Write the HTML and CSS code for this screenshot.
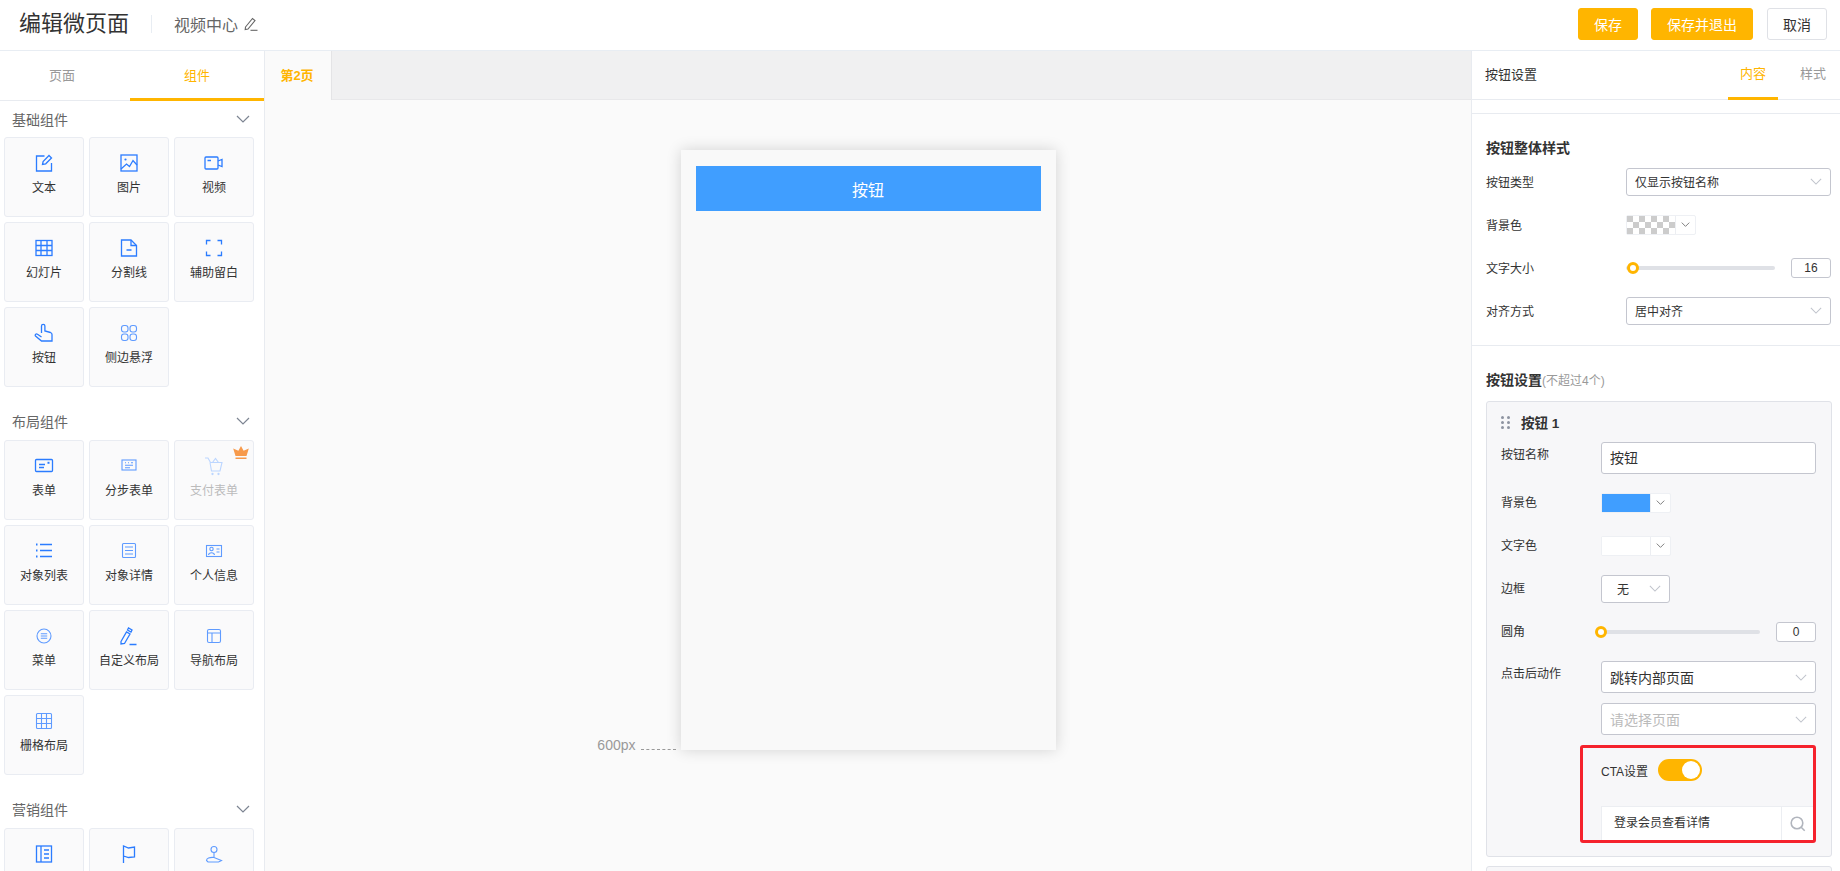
FILE: index.html
```html
<!DOCTYPE html>
<html lang="zh-CN">
<head>
<meta charset="utf-8">
<title>编辑微页面</title>
<link rel="stylesheet" href="styles.css">
</head>
<body>
<svg class="defs" width="0" height="0">
  <defs>
    <symbol id="chev" viewBox="0 0 14 8"><path d="M1 1l6 6 6-6"/></symbol>
  </defs>
</svg>
<header class="topbar">
  <div class="brand">
    <h1 class="title">编辑微页面</h1>
    <span class="sep"></span>
    <span class="pagename">视频中心</span>
    <svg class="pencil" viewBox="0 0 14 14"><path d="M1.500 10L8.500 1.500l2.500 2-7 8.500-2.800.6z"/><path d="M6.500 13.300h7"/></svg>
  </div>
  <div class="actions">
    <button class="btn primary w60">保存</button>
    <button class="btn primary w102">保存并退出</button>
    <button class="btn ghost w60">取消</button>
  </div>
</header>
<div class="main">
  <aside class="left">
    <div class="ltabs">
      <div class="ltab tab-a">页面</div>
      <div class="ltab tab-b on">组件</div>
    </div>
    <section class="group">
      <div class="ghead"><span>基础组件</span><svg class="gchev"><use href="#chev"/></svg></div>
      <div class="tiles">
        <div class="tile"><svg class="ico" viewBox="0 0 20 20"><path d="M10.500 3H2.500v15h15v-8"/><path d="M8.500 11.500l.6-3L15 2.500l2.500 2.500-5.800 5.800z"/></svg><span>文本</span></div>
        <div class="tile"><svg class="ico" viewBox="0 0 20 20"><rect x="2" y="2" width="16" height="16"/><circle cx="6.500" cy="6.500" r="1.100" class="solid"/><path d="M2 16l5.500-5 3 2.500L14 7.500l4 4.500"/></svg><span>图片</span></div>
        <div class="tile"><svg class="ico" viewBox="0 0 20 20"><rect x="1" y="4" width="13" height="12" rx="1"/><path d="M14 8l4-1.500v7L14 12M3.500 7.500h3.500"/></svg><span>视频</span></div>
        <div class="tile"><svg class="ico" viewBox="0 0 20 20"><rect x="2" y="2.500" width="16" height="15"/><path d="M2 7.500h16M2 12.500h16M7 2.500v15M13 2.500v15"/></svg><span>幻灯片</span></div>
        <div class="tile"><svg class="ico" viewBox="0 0 20 20"><path d="M2.500 2h9.500l5.500 5.500V18h-15z"/><path d="M12 2v5.500h5.500M7.500 12h5"/></svg><span>分割线</span></div>
        <div class="tile"><svg class="ico" viewBox="0 0 20 20"><path d="M2.500 6.500v-4h4M13.500 2.500h4v4M17.500 13.500v4h-4M6.500 17.500h-4v-4"/></svg><span>辅助留白</span></div>
        <div class="tile"><svg class="ico" viewBox="0 0 20 20"><path d="M7.500 10V3a1.700 1.700 0 0 1 3.400 0v5l5.600 1.500c1 .3 1.500 1 1.500 2V18H7.500L1.500 13c-.9-1.200.8-2.700 2-1.800l4 2.800"/></svg><span>按钮</span></div>
        <div class="tile"><svg class="ico lite" viewBox="0 0 20 20"><rect x="2.500" y="2.500" width="6.500" height="6.500" rx="2.500"/><rect x="11" y="2.500" width="6.500" height="6.500" rx="2.500"/><rect x="2.500" y="11" width="6.500" height="6.500" rx="2.500"/><rect x="11" y="11" width="6.500" height="6.500" rx="2.500"/></svg><span>侧边悬浮</span></div>
      </div>
    </section>
    <section class="group next">
      <div class="ghead"><span>布局组件</span><svg class="gchev"><use href="#chev"/></svg></div>
      <div class="tiles">
        <div class="tile"><svg class="ico" viewBox="0 0 20 20"><rect x="1.500" y="3.500" width="17" height="12" rx="1"/><path d="M5 8.500h6M5 11.500h5"/><path d="M13.500 6.800h2" class="thick"/></svg><span>表单</span></div>
        <div class="tile"><svg class="ico lite" viewBox="0 0 20 20"><rect x="3" y="4" width="14" height="10"/><path d="M6 6.800h1M9 6.800h1M12 6.800h2M6 9.300h8M6 11.800h5"/></svg><span>分步表单</span></div>
        <div class="tile"><svg class="crown" viewBox="0 0 16 14"><path d="M8 0l2.600 4.800L15.800 2.500 13.500 10h-11L.2 2.500l5.200 2.300z"/><rect x="2.500" y="11.500" width="11" height="1.500"/></svg><svg class="ico pale" viewBox="0 0 20 20"><path d="M1 2h3l2.500 4.500H18L16 15H7.500L6 6.500"/><path d="M8.500 6.500l3-4 3 4"/><circle cx="8.500" cy="18" r=".6"/><circle cx="14.500" cy="18" r=".6"/></svg><span class="off">支付表单</span></div>
        <div class="tile"><svg class="ico" viewBox="0 0 20 20"><path d="M6 3.500h12M6 9.500h12M6 15.500h12"/><path d="M2 3.500h1.500M2 9.500h1.500M2 15.500h1.500" class="thick"/></svg><span>对象列表</span></div>
        <div class="tile"><svg class="ico lite" viewBox="0 0 20 20"><rect x="3.500" y="2.500" width="13" height="14" rx="1"/><path d="M6 6h8M6 9.500h8M6 13h8"/></svg><span>对象详情</span></div>
        <div class="tile"><svg class="ico lite" viewBox="0 0 20 20"><rect x="2.500" y="4.500" width="15" height="11"/><circle cx="7.500" cy="8" r="1.700"/><path d="M4.500 14c.5-3 5.500-3 6 0M12.500 8h3M12.500 11h3"/></svg><span>个人信息</span></div>
        <div class="tile"><svg class="ico lite" viewBox="0 0 20 20"><circle cx="10" cy="10" r="7"/><path d="M6.800 7.800h6.400M6.800 10h6.400M6.800 12.200h6.400"/></svg><span>菜单</span></div>
        <div class="tile"><svg class="ico" viewBox="0 0 20 20"><path d="M2 15.500L7.500 6l3.500 2-5.500 9.500-3.500.5zM8.500 4l1-2 3.500 2-1 2zM10.500 18.500h7"/></svg><span>自定义布局</span></div>
        <div class="tile"><svg class="ico lite" viewBox="0 0 20 20"><rect x="3.500" y="3.500" width="13" height="13" rx="1.500"/><path d="M3.500 7h13M8 7v9.500"/></svg><span>导航布局</span></div>
        <div class="tile"><svg class="ico lite" viewBox="0 0 20 20"><rect x="2.500" y="2.500" width="15" height="15" rx="1"/><path d="M2.500 7.500h15M2.500 12.500h15M7.500 2.500v15M12.500 2.500v15"/></svg><span>栅格布局</span></div>
      </div>
    </section>
    <section class="group next">
      <div class="ghead"><span>营销组件</span><svg class="gchev"><use href="#chev"/></svg></div>
      <div class="tiles">
        <div class="tile"><svg class="ico" viewBox="0 0 20 20"><rect x="2.500" y="2" width="15" height="16"/><path d="M7 2v16M10 6h5M10 10h5M10 14h5"/></svg></div>
        <div class="tile"><svg class="ico" viewBox="0 0 20 20"><path d="M4.500 19V2l5 2 6-1v10l-6 .5-5-1.500"/></svg></div>
        <div class="tile"><svg class="ico lite" viewBox="0 0 20 20"><circle cx="10" cy="5.500" r="3"/><path d="M10 8.500v5M2.500 16.500c0-2 3-3.500 7.500-3l7.500 3-3 1.500H4z"/></svg></div>
      </div>
    </section>
  </aside>

  <main class="center">
    <div class="ctabs"><div class="ctab">第2页</div></div>
    <div class="canvas">
      <div class="phone">
        <div class="pbtn">按钮</div>
        <div class="mark"><span>600px</span><i></i></div>
      </div>
    </div>
  </main>

  <aside class="right">
    <div class="rhead">
      <span class="rtitle">按钮设置</span>
      <div class="rtabs"><span class="rtab on">内容</span><span class="rtab">样式</span></div>
    </div>
    <div class="rgap"></div>
    <section class="block first">
      <h3 class="btitle">按钮整体样式</h3>
      <div class="row"><label>按钮类型</label><div class="sel wide"><span>仅显示按钮名称</span><svg class="schev"><use href="#chev"/></svg></div></div>
      <div class="row"><label>背景色</label><div class="color"><span class="sw checker"></span><span class="cdrop"><svg class="cchev"><use href="#chev"/></svg></span></div></div>
      <div class="row"><label>文字大小</label><div class="slide"><div class="track"><b class="knob k1"></b></div><div class="num">16</div></div></div>
      <div class="row"><label>对齐方式</label><div class="sel wide"><span>居中对齐</span><svg class="schev"><use href="#chev"/></svg></div></div>
    </section>
    <section class="block second">
      <h3 class="btitle last">按钮设置<small>(不超过4个)</small></h3>
      <div class="card">
        <div class="chead"><span class="drag"><i></i><i></i><i></i><i></i><i></i><i></i></span><strong>按钮 1</strong></div>
        <div class="irow"><label>按钮名称</label><div class="field">按钮</div></div>
        <div class="row tall"><label>背景色</label><div class="color"><span class="sw blue"></span><span class="cdrop"><svg class="cchev"><use href="#chev"/></svg></span></div></div>
        <div class="row tall"><label>文字色</label><div class="color"><span class="sw white"></span><span class="cdrop"><svg class="cchev"><use href="#chev"/></svg></span></div></div>
        <div class="row tall"><label>边框</label><div class="sel small"><span>无</span><svg class="schev"><use href="#chev"/></svg></div></div>
        <div class="row tall"><label>圆角</label><div class="slide"><div class="track"><b class="knob k0"></b></div><div class="num">0</div></div></div>
        <div class="irow action"><label>点击后动作</label><div class="stack">
          <div class="sel high"><span>跳转内部页面</span><svg class="schev"><use href="#chev"/></svg></div>
          <div class="sel high"><span class="ph">请选择页面</span><svg class="schev"><use href="#chev"/></svg></div>
        </div></div>
        <div class="cta">
          <div class="ctarow"><span>CTA设置</span><span class="toggle"><b></b></span></div>
          <div class="search"><span class="stext">登录会员查看详情</span><span class="sbtn"><svg class="mag" viewBox="0 0 16 16"><circle cx="7" cy="7" r="5.800"/><path d="M11.200 11.200l3.500 3.500"/></svg></span></div>
        </div>
      </div>
      <div class="card nextcard"></div>
    </section>
  </aside>
</div>
</body>
</html>
```

FILE: styles.css
```css
* { box-sizing: border-box; }
html, body { margin: 0; height: 871px; overflow: hidden; }
body { font-family: "Liberation Sans", "Noto Sans CJK SC", sans-serif; font-size: 12px; color: #333; background: #fff; }
.defs { position: absolute; }
button { font: inherit; }

.topbar { height: 51px; border-bottom: 1px solid #e8edf3; display: flex; justify-content: space-between; align-items: center; padding: 0 13px 2px 19px; background: #fff; }
.brand { display: flex; align-items: center; }
.title { margin: 0; font-size: 22px; font-weight: 400; color: #333; line-height: 30px; }
.sep { width: 1px; height: 18px; background: #e8edf3; margin: 0 22px; }
.pagename { font-size: 16px; color: #666; }
.pencil { width: 14px; height: 14px; margin-left: 6px; fill: none; stroke: #666; stroke-width: 1.100; }
.actions { display: flex; gap: 13px; }
.btn { height: 32px; border-radius: 3px; font-size: 14px; padding: 0; cursor: pointer; }
.primary { background: #ffb500; border: 1px solid #ffb500; color: #fff; }
.ghost { background: #fff; border: 1px solid #dfe1e6; color: #333; margin-left: 1px; }
.w60 { width: 60px; }
.w102 { width: 102px; }

.main { display: flex; height: 820px; }
.left { width: 265px; flex: none; border-right: 1px solid #e8ebf0; background: #fff; overflow: hidden; }
.ltabs { display: flex; height: 50px; border-bottom: 1px solid #e8ebf0; }
.ltab { display: flex; align-items: center; justify-content: center; font-size: 13px; color: #999; padding-bottom: 2px; }
.tab-a { width: 130px; padding-right: 6px; }
.tab-b { width: 134px; }
.ltab.on { color: #ffb500; box-shadow: 0 1px 0 #ffb500, inset 0 -2px 0 #ffb500; }
.group { padding: 0 0 0 4px; }
.group.next { margin-top: 16px; }
.ghead { height: 36px; display: flex; align-items: center; justify-content: space-between; padding: 0 14px 1px 8px; font-size: 14px; color: #666; }
.group.next .ghead { height: 37px; }
.gchev { width: 14px; height: 8px; fill: none; stroke: #7d8592; stroke-width: 1.200; }
.tiles { display: grid; grid-template-columns: repeat(3, 80px); grid-auto-rows: 80px; gap: 5px; }
.tile { position: relative; border: 1px solid #e9ecf2; border-radius: 3px; background: #fafafb; display: flex; flex-direction: column; align-items: center; padding-top: 15px; gap: 5px; }
.tile span { line-height: 20px; color: #333; white-space: nowrap; }
.tile span.off { color: #bbb; }
.ico { width: 20px; height: 20px; fill: none; stroke: #2b7cff; stroke-width: 1.300; }
.ico.lite { stroke: #5f9bff; stroke-width: 1.100; }
.ico.pale { stroke: #bcd6ff; stroke-width: 1.100; }
.ico .solid { fill: #2b7cff; stroke: none; }
.ico .thick { stroke-width: 2; }
.crown { position: absolute; top: 5px; right: 4px; width: 16px; height: 14px; fill: #f79a4b; }

.center { flex: 1; min-width: 0; display: flex; flex-direction: column; background: #fafafa; }
.ctabs { height: 49px; background: #f0f0f1; border-bottom: 1px solid #e8e8ea; flex: none; display: flex; }
.ctab { width: 67px; height: 49px; background: #fafafa; border-right: 1px solid #e4e4e6; color: #ffb500; font-weight: 700; font-size: 13px; display: flex; align-items: center; justify-content: center; padding: 0 2px 2px 0; }
.canvas { flex: 1; padding-top: 50px; }
.phone { position: relative; width: 375px; height: 600px; margin: 0 auto; background: #f9f9f9; box-shadow: 0 0 14px rgba(0, 0, 0, .16); padding: 16px 15px 0; }
.pbtn { height: 45px; background: #409eff; color: #fff; font-size: 16px; display: flex; align-items: center; justify-content: center; }
.mark { position: absolute; right: 380px; bottom: -3px; display: flex; align-items: flex-end; gap: 5px; font-size: 14px; color: #999; line-height: 16px; white-space: nowrap; }
.mark i { width: 35px; border-bottom: 1px dashed #999; margin-bottom: 3px; }

.right { width: 369px; flex: none; border-left: 1px solid #e8ebf0; background: #fff; overflow: hidden; }
.rhead { height: 49px; border-bottom: 1px solid #e8ebf0; display: flex; justify-content: space-between; align-items: center; padding: 0 14px 4px 13px; }
.rtitle { font-size: 13px; color: #333; }
.rtabs { display: flex; align-items: center; }
.rtab { font-size: 13px; color: #999; height: 49px; line-height: 45px; margin-bottom: -4px; }
.rtab.on { color: #ffb500; width: 50px; text-align: center; box-shadow: inset 0 -3px 0 #ffb500; margin-right: 22px; }
.rgap { height: 14px; border-bottom: 1px solid #e8ebf0; }
.block { padding: 24px 9px 0 14px; }
.block.first { padding-bottom: 13px; border-bottom: 1px solid #e8ebf0; }
.btitle { margin: 0 0 2px; font-size: 14px; font-weight: 700; line-height: 20px; color: #333; }
.btitle.last { margin-bottom: 10px; }
.btitle small { font-size: 12px; font-weight: 400; color: #999; }
.row { height: 43px; display: flex; align-items: center; }
.row label, .irow label { width: 140px; flex: none; color: #333; padding-bottom: 1px; }
.card .row label, .card .irow label { width: 100px; }
.card .row label { padding-bottom: 2px; }
.sel { height: 28px; border: 1px solid #c4c6cf; border-radius: 3px; background: #fff; display: flex; align-items: center; justify-content: space-between; padding: 0 8px; color: #333; }
.sel.wide { width: 205px; }
.sel.small { width: 69px; padding-left: 15px; }
.sel.high { height: 32px; width: 215px; }
.schev { width: 12px; height: 7px; fill: none; stroke: #c0c4cc; stroke-width: 1.200; }
.ph { color: #bbb; }
.color { width: 70px; height: 20px; display: flex; background: #fff; border: 1px solid #eef0f4; border-radius: 2px; }
.sw { width: 48px; height: 100%; }
.checker { background-color: #fff; background-image: conic-gradient(#fff 25%, #ccc 0 50%, #fff 0 75%, #ccc 0); background-size: 12px 12px; }
.blue { background: #409eff; }
.white { background: #fff; }
.cdrop { flex: 1; border-left: 1px solid #eceef2; display: flex; align-items: center; justify-content: center; }
.cchev { width: 9px; height: 5px; fill: none; stroke: #777; stroke-width: 1.500; }
.slide { display: flex; align-items: center; gap: 16px; }
.track { position: relative; width: 149px; height: 4px; background: #dfe1e6; border-radius: 2px; }
.knob { position: absolute; top: -4px; width: 12px; height: 12px; border: 3px solid #ffb500; border-radius: 50%; background: #fff; }
.k1 { left: 1px; }
.k0 { left: -6px; }
.card .track { width: 159px; }
.num { width: 40px; height: 20px; border: 1px solid #c4c6cf; border-radius: 3px; background: #fff; text-align: center; line-height: 18px; color: #333; }

.card { border: 1px solid #e0e2e8; border-radius: 3px; background: #f7f7f9; padding: 0 14px 13px; width: 346px; }
.chead { height: 40px; display: flex; align-items: center; }
.chead strong { font-size: 13.500px; font-weight: 700; color: #333; margin-left: 11px; }
.drag { display: grid; grid-template-columns: repeat(2, 3px); gap: 2px 3px; width: 9px; }
.drag i { width: 3px; height: 3px; border-radius: 50%; background: #8d93a0; }
.irow { display: flex; margin-bottom: 7px; }
.irow label { padding-top: 3px; line-height: 20px; }
.irow.action { margin: 8px 0 10px; }
.field { width: 215px; height: 32px; border: 1px solid #c4c6cf; border-radius: 3px; background: #fff; line-height: 30px; padding-left: 8px; font-size: 14px; }
.stack { display: flex; flex-direction: column; gap: 10px; }
.high span { font-size: 14px; }
.row.tall { height: 43px; }
.cta { margin-left: 79px; width: 236px; height: 98px; border: 3px solid #f5222d; border-radius: 3px; padding: 11px 0 0 18px; }
.ctarow { display: flex; align-items: center; gap: 10px; height: 22px; margin-bottom: 25px; }
.toggle { width: 44px; height: 22px; border-radius: 11px; background: #ffb500; position: relative; display: block; }
.toggle b { position: absolute; top: 2px; right: 2px; width: 18px; height: 18px; border-radius: 50%; background: #fff; }
.search { height: 34px; width: 212px; display: flex; background: #fff; border-top: 1px solid #eceef2; border-left: 1px solid #eceef2; }
.stext { width: 179px; padding-left: 12px; line-height: 32px; }
.sbtn { flex: 1; border-left: 1px solid #eceef2; display: flex; align-items: center; justify-content: center; }
.mag { width: 16px; height: 16px; fill: none; stroke: #b1b5bd; stroke-width: 1.600; }
.nextcard { margin-top: 9px; height: 40px; }
```
